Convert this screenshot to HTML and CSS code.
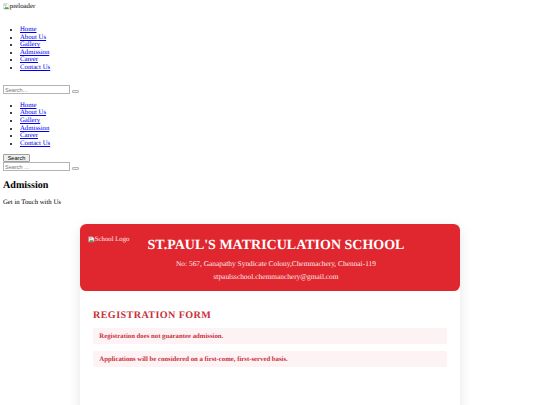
FILE: index.html
```html
<!DOCTYPE html>
<html lang="en">
<head>
    <meta charset="UTF-8">
    <meta name="viewport" content="width=device-width, initial-scale=1.0">
    <title>St.Paul's Matriculation School - Admission</title>
    <link rel="stylesheet" href="styles.css">
</head>
<body>
    <div class="preloader">
        <svg class="broken-img" viewBox="0 0 16 16"><path d="M1.5 1.5h9l4 4v9h-13z" fill="#fff" stroke="#a0a0a0"/><path d="M2.5 14l4-6 3 3 2-2 2.5 5z" fill="#5a9e4b"/><path d="M3 3h6v4H3z" fill="#b5cdf0"/></svg>preloader
    </div>
    <nav class="main-nav">
        <ul>
            <li><a href="#">Home</a></li>
            <li><a href="#">About Us</a></li>
            <li><a href="#">Gallery</a></li>
            <li><a href="#">Admission</a></li>
            <li><a href="#">Career</a></li>
            <li><a href="#">Contact Us</a></li>
        </ul>
    </nav>
    <form class="search-form">
        <input type="text" placeholder="Search...">
        <button type="button" class="empty-button"></button>
    </form>
    <nav class="mobile-nav">
        <ul>
            <li><a href="#">Home</a></li>
            <li><a href="#">About Us</a></li>
            <li><a href="#">Gallery</a></li>
            <li><a href="#">Admission</a></li>
            <li><a href="#">Career</a></li>
            <li><a href="#">Contact Us</a></li>
        </ul>
    </nav>
    <button type="button" class="search-toggle">Search</button>
    <form class="search-form">
        <input type="text" placeholder="Search ...">
        <button type="button" class="empty-button"></button>
    </form>
    <h2 class="page-title">Admission</h2>
    <p class="page-sub">Get in Touch with Us</p>

    <div class="container">
        <div class="school-header">
            <div class="logo">
                <svg class="broken-img" viewBox="0 0 16 16"><path d="M1.5 1.5h9l4 4v9h-13z" fill="#fff" stroke="#a0a0a0"/><path d="M2.5 14l4-6 3 3 2-2 2.5 5z" fill="#5a9e4b"/><path d="M3 3h6v4H3z" fill="#b5cdf0"/></svg>School Logo
            </div>
            <div class="school-info">
                <h1>ST.PAUL'S MATRICULATION SCHOOL</h1>
                <p>No: 567, Ganapathy Syndicate Colony,Chemmachery, Chennai-119</p>
                <p>stpaulsschool.chemmanchery@gmail.com</p>
            </div>
        </div>
        <div class="form-body">
            <h2 class="form-title">REGISTRATION FORM</h2>
            <div class="notice">Registration does not guarantee admission.</div>
            <div class="notice">Applications will be considered on a first-come, first-served basis.</div>
        </div>
    </div>
</body>
</html>
```

FILE: styles.css
```css
html {
    overflow: hidden;
}
body {
    margin: 3px;
    font-family: "Liberation Serif", "Times New Roman", serif;
    font-size: 6.75px;
    line-height: 7.6px;
    color: #000;
    text-rendering: geometricPrecision; /* small text, keep the real widths */
}
a {
    text-decoration-thickness: 0.4px;
}
.broken-img {
    width: 6.75px;
    height: 6.75px;
    vertical-align: top;
}
.main-nav ul,
.mobile-nav ul {
    margin: 0;
    padding-left: 17px;
}
.main-nav {
    margin: 15.4px 0 13.8px;
}
.mobile-nav {
    margin: 7.5px 0 6.4px;
}
.search-form {
    display: flex;
    align-items: center;
    gap: 1.5px;
    margin: 0;
}
.search-form input {
    box-sizing: border-box;
    width: 67px;
    height: 9px;
    padding: 0 1px;
    border: 1px solid #b4b4b4;
    font-family: "Liberation Sans", Arial, sans-serif;
    font-size: 5.6px;
}
.search-form input::placeholder {
    color: #777;
}
.empty-button {
    box-sizing: border-box;
    width: 7.5px;
    height: 3px;
    margin-top: 3px;
    padding: 0;
    background-color: #efefef;
    border: 1px solid #b4b4b4;
    border-radius: 1px;
}
.search-toggle {
    display: block;
    box-sizing: border-box;
    width: 27px;
    height: 8.5px;
    padding: 0;
    background-color: #efefef;
    border: 1px solid #a0a0a0;
    border-radius: 1px;
    font-family: "Liberation Sans", Arial, sans-serif;
    font-size: 5.6px;
    line-height: 6px;
}
.page-title {
    font-size: 10.1px;
    line-height: 11.6px;
    margin: 9px 0 0;
}
.page-sub {
    margin: 7.5px 0 0;
}
.container {
    width: 380px;
    margin: 17.3px auto 0 77px;
    background-color: #fff;
    border-radius: 6.3px;
    box-shadow: 0 4px 13px rgba(0, 0, 0, 0.1);
}
.school-header {
    display: flex;
    box-sizing: border-box;
    height: 67px;
    padding: 12px 8px;
    background-color: #e0272f;
    border-radius: 6.3px;
    color: #fff;
}
.logo {
    flex-shrink: 0;
    width: 12px;
    white-space: nowrap;
    opacity: 0.9;
}
.school-info {
    flex: 1;
    padding-top: 1.5px;
    text-align: center;
}
.school-info h1 {
    margin: 0 0 6.2px;
    font-size: 14px;
    line-height: 16px;
}
.school-info p {
    margin: 0 0 4.6px;
    font-size: 7.4px;
    line-height: 8.5px;
    opacity: 0.9;
}
.form-body {
    height: 200px;
    padding: 18px 13px;
}
.form-title {
    margin: 0 0 6px;
    color: #c9303a;
    font-size: 10.1px;
    line-height: 13px;
    letter-spacing: 0.42px;
}
.notice {
    margin-bottom: 7px;
    padding: 5px 6.3px 3.4px;
    background-color: #fdf3f4;
    border-radius: 2px;
    color: #c9303a;
    font-weight: bold;
}
```
